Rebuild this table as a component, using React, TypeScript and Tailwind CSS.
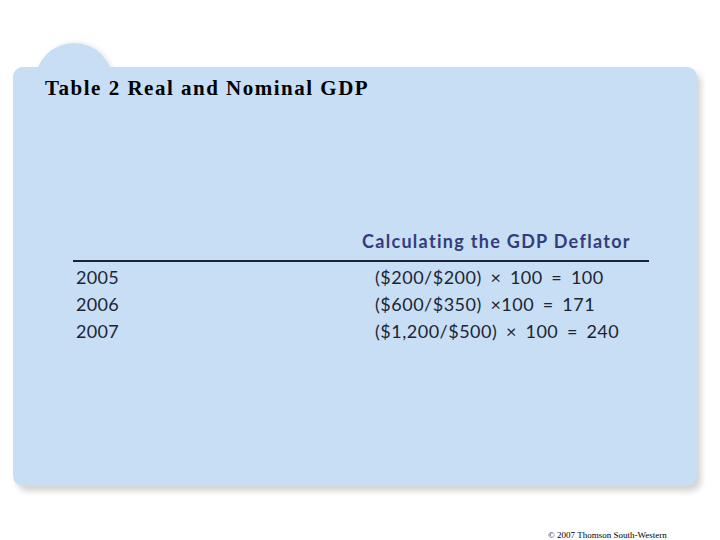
import React from "react";

export default function App() {
  const rows = [
    ["2005", "($200/$200) × 100 = 100"],
    ["2006", "($600/$350) ×100 = 171"],
    ["2007", "($1,200/$500) × 100 = 240"],
  ];
  return (
    <div className="w-[720px] h-[540px] bg-white relative overflow-hidden">
      <div className="pt-[67px] pl-[13px]">
        <div className="relative w-[684px] h-[419px] bg-[#c8def4] rounded-[10px] shadow-[4px_5px_6px_rgba(0,0,0,0.18)]">
          <div className="absolute left-[22px] top-[-24px] w-[78px] h-[50px] bg-[#c8def4] rounded-t-[40px] shadow-[2px_-1px_4px_rgba(0,0,0,0.08)]" />
          <div className="absolute left-[0px] top-[0px] w-[120px] h-[30px] bg-[#c8def4] rounded-tl-[10px]" />
          <div className="relative pt-[6px] pl-[32px]">
            <h1
              className="text-[21px] font-bold text-black tracking-[1.5px] leading-[30px]"
              style={{ fontFamily: '"Liberation Serif", "Times New Roman", serif' }}
            >
              Table 2 Real and Nominal GDP
            </h1>
          </div>
          <div
            className="relative mt-[126px] ml-[60px] w-[576px]"
            style={{ fontFamily: 'Lato, "Open Sans", sans-serif' }}
          >
            <div className="pl-[289px] text-[18px] font-bold text-[#343c7c] leading-[24px] pb-[7px] tracking-[1.3px]">
              Calculating the GDP Deflator
            </div>
            <div className="h-[2px] bg-[#1b2433]" />
            <div className="pt-[2px] text-[18px] text-[#1c2535] leading-[27px]">
              {rows.map(([y, f]) => (
                <div key={y} className="flex">
                  <div className="w-[302px] pl-[3px] tracking-[0.3px]">{y}</div>
                  <div className="tracking-[0.5px] [word-spacing:3.5px]">{f}</div>
                </div>
              ))}
            </div>
          </div>
        </div>
      </div>
      <div
        className="absolute left-[548px] top-[529px] text-[9px] text-black"
        style={{ fontFamily: '"Liberation Serif", serif' }}
      >
        © 2007 Thomson South-Western
      </div>
    </div>
  );
}
